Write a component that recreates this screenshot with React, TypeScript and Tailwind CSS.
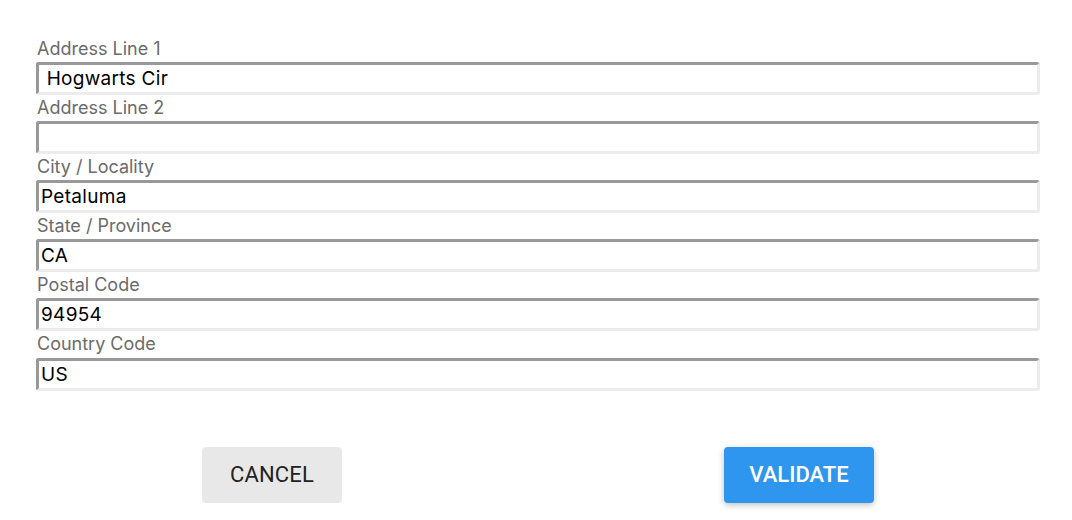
import React from "react";

const fields: [string, string][] = [
  ["Address Line 1", " Hogwarts Cir"],
  ["Address Line 2", ""],
  ["City / Locality", "Petaluma"],
  ["State / Province", "CA"],
  ["Postal Code", "94954"],
  ["Country Code", "US"],
];

export default function App() {
  return (
    <div className="w-[1072px] h-[520px] bg-white pt-[36px]" style={{ fontFamily: "Inter, 'Liberation Sans', sans-serif" }}>
      <div className="pl-[36px] pr-[32px] flex flex-col">
        {fields.map(([label, value]) => (
          <div key={label} className="flex flex-col">
            <div className="h-[26.1px] text-[18px] leading-[26px] text-[#6b6b6b] pl-[1px]">{label}</div>
            <input
              readOnly
              value={value}
              className="h-[33px] w-full rounded-[3px] border-[3px] border-t-[#999999] border-l-[#999999] border-b-[#ececec] border-r-[#ececec] bg-white px-[2px] text-[19px] tracking-[0.3px] text-black outline-none"
            />
          </div>
        ))}
      </div>
      <div className="flex mt-[56px] pl-[202px]" style={{ fontFamily: "Roboto, sans-serif" }}>
        <button className="w-[140px] h-[56px] rounded-[4px] bg-[#e8e8e8] text-[22px] text-[#222] tracking-[0.2px]">CANCEL</button>
        <button className="ml-[382px] w-[150px] h-[56px] rounded-[4px] bg-[#2e96ee] text-[22px] font-medium text-white shadow-[0_2px_6px_rgba(0,0,0,0.25)]">VALIDATE</button>
      </div>
    </div>
  );
}
